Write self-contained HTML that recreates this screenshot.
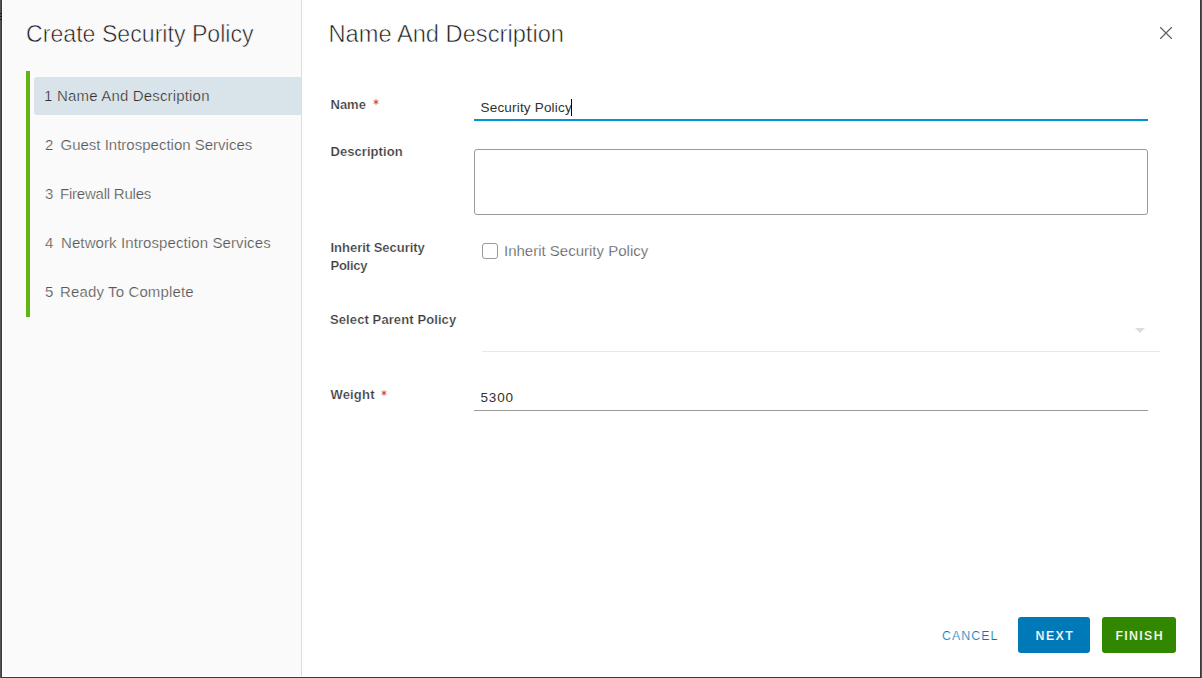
<!DOCTYPE html>
<html><head><meta charset="utf-8">
<style>
*{box-sizing:border-box;margin:0;padding:0}
html,body{width:1202px;height:678px;overflow:hidden}
body{background:#3a3a3a;font-family:"Liberation Sans",sans-serif;position:relative}
.modal{position:absolute;left:2px;top:0;width:1198px;height:677px;background:#fff}
.side{position:absolute;left:1px;top:0;width:299px;height:676px;background:#fafafa;border-right:1px solid #dedede}
.t{position:absolute;white-space:nowrap;line-height:1}
.h1{color:#1c1c1c;font-weight:400}
.bar{position:absolute;left:23px;top:71px;width:4px;height:246px;background:#60b515}
.act{position:absolute;left:31px;top:77px;width:267px;height:38px;background:#d9e4ea;border-radius:3px 0 0 3px}
.nav{font-size:15px;color:#565656;-webkit-text-stroke:0.22px #fafafa}
.lbl{font-size:13px;font-weight:700;color:#3a3a3a;-webkit-text-stroke:0.22px #fff}
.req{color:#c92100;font-weight:400}
</style></head><body>
<div style="position:absolute;left:0;top:0;width:1px;height:678px;background:#545454"></div><div style="position:absolute;left:1201px;top:0;width:1px;height:678px;background:#545454"></div><div style="position:absolute;left:0;top:13px;width:2px;height:1px;background:#1a1a1a;box-shadow:0 3px 0 #1a1a1a,0 6px 0 #1a1a1a"></div>
<div class="modal">
 <div class="side">
  <div class="t h1" style="left:23px;top:22.9px;font-size:23.15px;-webkit-text-stroke:0.55px #fafafa">Create Security Policy</div>
  <div class="bar"></div>
  <div class="act"></div>
  <div class="t nav" style="left:41px;top:88px;color:#313131">1</div>
  <div class="t nav" style="left:54px;top:88px;color:#313131;letter-spacing:0.17px">Name And Description</div>
  <div class="t nav" style="left:42px;top:137px">2</div>
  <div class="t nav" style="left:57.5px;top:137px">Guest Introspection Services</div>
  <div class="t nav" style="left:42px;top:186px">3</div>
  <div class="t nav" style="left:57px;top:186px;letter-spacing:-0.22px">Firewall Rules</div>
  <div class="t nav" style="left:42px;top:235px">4</div>
  <div class="t nav" style="left:58px;top:235px;letter-spacing:0.1px">Network Introspection Services</div>
  <div class="t nav" style="left:42px;top:284px">5</div>
  <div class="t nav" style="left:57px;top:284px;letter-spacing:0.13px">Ready To Complete</div>
 </div>
 <div class="t h1" style="left:326.5px;top:22.6px;font-size:23.68px;-webkit-text-stroke:0.55px #fff">Name And Description</div>
 <svg style="position:absolute;left:1157px;top:26px" width="14" height="14" viewBox="0 0 14 14"><path d="M1.5 1.5 L12.5 12.5 M12.5 1.5 L1.5 12.5" stroke="#5e5e5e" stroke-width="1.15" fill="none" stroke-linecap="round"/></svg>

 <div class="t lbl" style="left:328.5px;top:98px">Name</div>
 <svg style="position:absolute;left:369.65px;top:97.9px" width="8" height="8" viewBox="0 0 8 8"><path d="M4 1.3V6.7M1.66 2.65L6.34 5.35M6.34 2.65L1.66 5.35" stroke="#d0432b" stroke-width="1" fill="none"/></svg>
 <div class="t" style="left:478.5px;top:100.5px;font-size:13.5px;letter-spacing:0.19px;color:#313131">Security Policy</div>
 <div style="position:absolute;left:569px;top:99px;width:1px;height:17px;background:#000"></div>
 <div style="position:absolute;left:472px;top:119px;width:674px;height:2px;background:#0094d2"></div>

 <div class="t lbl" style="left:328.5px;top:145px;letter-spacing:0.06px">Description</div>
 <div style="position:absolute;left:472px;top:149px;width:674px;height:66px;border:1px solid #9a9a9a;border-radius:3px"></div>

 <div class="t lbl" style="left:328.5px;top:241px;letter-spacing:-0.02px">Inherit Security</div>
 <div class="t lbl" style="left:328.5px;top:259px;letter-spacing:-0.25px">Policy</div>
 <div style="position:absolute;left:480px;top:243px;width:16px;height:16px;border:1px solid #9a9a9a;border-radius:3px"></div>
 <div class="t" style="left:502px;top:242.5px;font-size:15px;color:#565656;-webkit-text-stroke:0.25px #fff">Inherit Security Policy</div>

 <div class="t lbl" style="left:328px;top:312.5px;letter-spacing:0.1px">Select Parent Policy</div>
 <div style="position:absolute;left:480px;top:351px;width:678px;height:1px;background:#e8e8e8"></div>
 <svg style="position:absolute;left:1133px;top:328px" width="10" height="5"><path d="M0 0 L10 0 L5 5 Z" fill="#dcdcdc"/></svg>

 <div class="t lbl" style="left:328.4px;top:387.5px;letter-spacing:0.2px">Weight</div>
 <svg style="position:absolute;left:378.25px;top:388.6px" width="8" height="8" viewBox="0 0 8 8"><path d="M4 1.3V6.7M1.66 2.65L6.34 5.35M6.34 2.65L1.66 5.35" stroke="#d0432b" stroke-width="1" fill="none"/></svg>
 <div class="t" style="left:478.5px;top:390.5px;font-size:13.5px;letter-spacing:0.85px;color:#313131">5300</div>
 <div style="position:absolute;left:472px;top:410px;width:674px;height:1px;background:#9a9a9a"></div>

 <div class="t" style="left:940px;top:630px;font-size:12.4px;letter-spacing:1.05px;color:#0079b8;-webkit-text-stroke:0.2px #fff">CANCEL</div>
 <div style="position:absolute;left:1016px;top:617px;width:72px;height:36px;background:#0079b8;border-radius:3px"></div>
 <div class="t" style="left:1033.5px;top:630px;font-size:12.4px;letter-spacing:1.45px;color:#fff;font-weight:700;-webkit-text-stroke:0.2px #0079b8">NEXT</div>
 <div style="position:absolute;left:1100px;top:617px;width:74px;height:36px;background:#318700;border-radius:3px"></div>
 <div class="t" style="left:1113.5px;top:630px;font-size:12.4px;letter-spacing:1.3px;color:#fff;font-weight:700;-webkit-text-stroke:0.2px #318700">FINISH</div>
</div>
</body></html>
